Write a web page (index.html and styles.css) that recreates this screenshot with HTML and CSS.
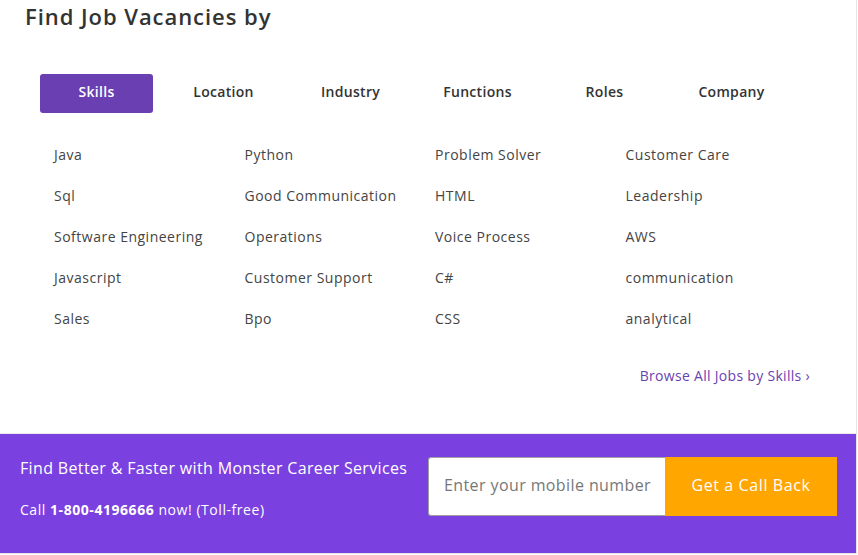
FILE: index.html
```html
<!DOCTYPE html>
<html>
<head>
<meta charset="utf-8">
<link rel="stylesheet" href="styles.css">
</head>
<body>
<div class="page">
  <section class="vacancies">
    <h2 class="title">Find Job Vacancies by</h2>
    <nav class="tabs">
      <span class="tab active">Skills</span>
      <span class="tab">Location</span>
      <span class="tab">Industry</span>
      <span class="tab">Functions</span>
      <span class="tab">Roles</span>
      <span class="tab">Company</span>
    </nav>
    <div class="grid">
      <a>Java</a><a>Python</a><a>Problem Solver</a><a>Customer Care</a>
      <a>Sql</a><a>Good Communication</a><a>HTML</a><a>Leadership</a>
      <a>Software Engineering</a><a>Operations</a><a>Voice Process</a><a>AWS</a>
      <a>Javascript</a><a>Customer Support</a><a>C#</a><a>communication</a>
      <a>Sales</a><a>Bpo</a><a>CSS</a><a>analytical</a>
    </div>
    <div class="browse"><a>Browse All Jobs by Skills ›</a></div>
  </section>
  <section class="band">
    <div class="band-text">
      <p class="band-head">Find Better &amp; Faster with Monster Career Services</p>
      <p class="band-call">Call <b>1-800-4196666</b> now! (Toll-free)</p>
    </div>
    <form class="callback">
      <input class="mobile" type="text" placeholder="Enter your mobile number">
      <button class="cta" type="button">Get a Call Back</button>
    </form>
  </section>
</div>
</body>
</html>
```
FILE: styles.css
```css
* { box-sizing: border-box; }
body {
  margin: 0;
  background: #ffffff;
  font-family: "Open Sans", "Liberation Sans", sans-serif;
}
.page {
  width: 857px;
  height: 554px;
  border-right: 1px solid #e4e4e4;
  border-bottom: 1px solid #e4e4e4;
  display: flex;
  flex-direction: column;
}
.vacancies {
  height: 434px;
  border-bottom: 1px solid #ececec;
  padding: 0 0 0 25px;
}
.title {
  margin: 0;
  padding-top: 1px;
  font-size: 22px;
  font-weight: 600;
  color: #333333;
  line-height: 30px;
  letter-spacing: 0.95px;
}
.tabs {
  display: flex;
  gap: 14px;
  margin: 43px 0 0 15px;
}
.tab {
  width: 113px;
  height: 39px;
  padding-bottom: 4px;
  display: flex;
  align-items: center;
  justify-content: center;
  font-size: 14px;
  font-weight: 600;
  color: #333333;
  border-radius: 3px;
  letter-spacing: 0.3px;
}
.tab.active {
  background: #6a3fb2;
  color: #ffffff;
}
.grid {
  display: grid;
  grid-template-columns: repeat(4, 190.5px);
  grid-auto-rows: 41px;
  margin: 32px 0 0 29px;
}
.grid a {
  font-size: 14px;
  color: #444444;
  line-height: 20px;
  letter-spacing: 0.5px;
}
.browse {
  margin-top: 14px;
  padding-right: 46px;
  text-align: right;
}
.browse a {
  font-size: 14px;
  color: #6a3fb2;
  letter-spacing: 0.3px;
}
.band {
  flex: 1;
  background: #7b40e0;
  display: flex;
  align-items: flex-start;
  padding: 23px 19px 0 20px;
  color: #ffffff;
}
.band-text {
  flex: 1;
}
.band-head {
  margin: 0;
  font-size: 16px;
  line-height: 22px;
  letter-spacing: 0.35px;
}
.band-call {
  margin: 21px 0 0 0;
  font-size: 14px;
  line-height: 20px;
  letter-spacing: 0.55px;
}
.band-call b { font-weight: 700; }
.callback {
  display: flex;
  margin: 0;
}
.mobile {
  width: 237px;
  height: 59px;
  border: 1px solid #a0a0a0;
  border-right: none;
  border-radius: 3px 0 0 3px;
  padding: 0 0 3px 15px;
  font-family: inherit;
  font-size: 16px;
  letter-spacing: 0.4px;
  color: #333;
  background: #fff;
  outline: none;
}
.mobile::placeholder { color: #777777; }
.cta {
  width: 172px;
  height: 59px;
  border: none;
  padding: 0 0 3px 0;
  background: #ffa600;
  color: #ffffff;
  font-family: inherit;
  font-size: 16px;
  letter-spacing: 0.6px;
}
```
